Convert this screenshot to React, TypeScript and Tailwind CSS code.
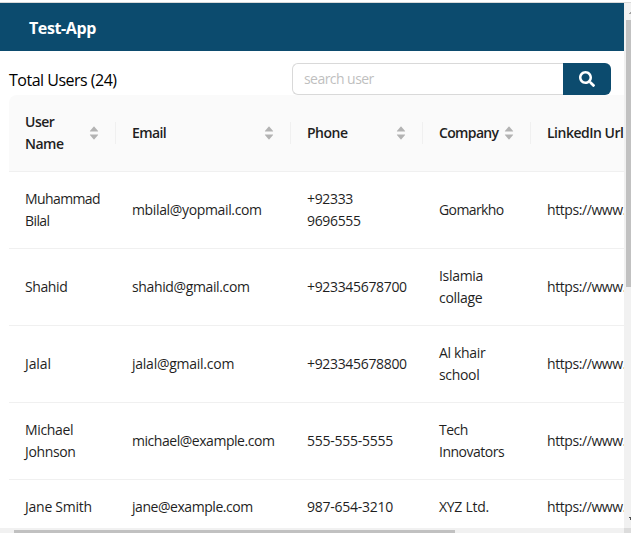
import type { ReactNode } from "react";
import { FaSearch } from "react-icons/fa";

const columns = [
  { title: "User Name", sortable: true, tracking: "tracking-[-0.5px]" },
  { title: "Email", sortable: true, tracking: "tracking-[-0.6px]" },
  { title: "Phone", sortable: true, tracking: "tracking-[-0.5px]" },
  { title: "Company", sortable: true, tracking: "tracking-[-0.65px]" },
  { title: "LinkedIn Url", sortable: false, tracking: "tracking-[-0.5px]" },
];

const users = [
  {
    name: ["Muhammad Bilal", "tracking-[-0.6px]"],
    email: ["mbilal@yopmail.com", "tracking-[-0.35px]"],
    phone: ["+92333 9696555", "tracking-[-0.33px]"],
    company: ["Gomarkho", "tracking-[-0.6px]"],
  },
  {
    name: ["Shahid", "tracking-[-0.4px]"],
    email: ["shahid@gmail.com", "tracking-[-0.37px]"],
    phone: ["+923345678700", "tracking-[-0.33px]"],
    company: ["Islamia collage", "tracking-[-0.3px]"],
  },
  {
    name: ["Jalal", "tracking-[-0.1px]"],
    email: ["jalal@gmail.com", "tracking-[-0.25px]"],
    phone: ["+923345678800", "tracking-[-0.33px]"],
    company: ["Al khair school", "tracking-[-0.33px]"],
  },
  {
    name: ["Michael Johnson", "tracking-[-0.35px]"],
    email: ["michael@example.com", "tracking-[-0.46px]"],
    phone: ["555-555-5555", "tracking-[-0.25px]"],
    company: ["Tech Innovators", "tracking-[-0.5px]"],
  },
  {
    name: ["Jane Smith", "tracking-[-0.25px]"],
    email: ["jane@example.com", "tracking-[-0.45px]"],
    phone: ["987-654-3210", "tracking-[-0.25px]"],
    company: ["XYZ Ltd.", "tracking-[-0.28px]"],
  },
];

const grid = "grid grid-cols-[107px_175px_132px_108px_200px] w-[722px]";

function Sorter() {
  return (
    <span className="flex w-3 shrink-0 flex-col text-[#b3b3b3]">
      <svg viewBox="0 0 1024 1024" className="size-3" fill="currentColor">
        <path d="M858.9 689L530.5 308.2c-9.4-10.9-27.5-10.9-37 0L165.1 689c-12.2 14.2-1.2 35 18.5 35h656.8c19.7 0 30.7-20.8 18.5-35z" />
      </svg>
      <svg viewBox="0 0 1024 1024" className="mt-[-3.6px] size-3" fill="currentColor">
        <path d="M840.4 300H183.6c-19.7 0-30.7 20.8-18.5 35l328.4 380.8c9.4 10.9 27.5 10.9 37 0L858.9 335c12.2-14.2 1.2-35-18.5-35z" />
      </svg>
    </span>
  );
}

function Cell({ children, className = "" }: { children: ReactNode; className?: string }) {
  return <div className={`flex items-center pl-4 ${className}`}>{children}</div>;
}

export default function App() {
  return (
    <div className="flex h-[533px] w-[631px] flex-col overflow-hidden bg-white pt-0.5 font-['Open_Sans','Noto_Sans',sans-serif] text-[#1f1f1f]">
      <div className="h-px shrink-0 bg-[#d9d9d9]" />
      <div className="flex h-[525px] shrink-0">
        <div className="w-[624px] overflow-hidden">
          <header className="flex h-12 items-center bg-[#0c4b6e] pt-0.5 pl-[29px] text-base font-bold text-white">
            <span className="tracking-[-0.4px]">Test-App</span>
          </header>
          <div className="flex h-11 items-end justify-between pr-[13px] pl-[9px]">
            <span className="flex h-8 items-center pt-px text-base tracking-[-0.5px] text-black">Total Users (24)</span>
            <div className="flex h-8">
              <div className="flex w-[271px] items-center rounded-l-md border border-r-0 border-[#d9d9d9] pl-[11px] text-sm tracking-[-0.55px] text-[#bfbfbf]">
                search user
              </div>
              <button className="flex w-12 items-center justify-center rounded-r-md bg-[#0c4b6e] text-white">
                <FaSearch size={16} />
              </button>
            </div>
          </div>
          <div className="ml-[9px] text-sm leading-[22px]">
            <div className={`${grid} h-[77px] rounded-tl-lg border-b border-[#f0f0f0] bg-[#fafafa] font-semibold`}>
              {columns.map((column) => (
                <div key={column.title} className="flex items-center">
                  <div className="flex flex-1 items-center justify-between pr-[15px] pl-4">
                    <span className={column.tracking}>{column.title}</span>
                    {column.sortable && <Sorter />}
                  </div>
                  <div className="h-[22px] w-px bg-[#f0f0f0]" />
                </div>
              ))}
            </div>
            {users.map(({ name, email, phone, company }, i) => (
              <div key={name[0]} className={`${grid} border-b border-[#f0f0f0] ${i === 4 ? "h-[55px]" : "h-[77px]"}`}>
                <Cell className={`pr-3 ${name[1]}`}>{name[0]}</Cell>
                <Cell className={`pr-3 ${email[1]}`}>{email[0]}</Cell>
                <Cell className={`pr-6 ${phone[1]}`}>{phone[0]}</Cell>
                <Cell className={`pr-4 ${company[1]}`}>{company[0]}</Cell>
                <Cell className="pr-4 tracking-[-0.42px]">https://www.linkedin.com</Cell>
              </div>
            ))}
          </div>
        </div>
        <div className="flex w-[7px] flex-col overflow-hidden bg-[#f1f1f1] pl-0.5">
          <svg width="5" height="17" className="shrink-0" fill="#a3a3a3"><path d="M3 11h2V9H4v1H3z" /></svg>
          <div className="h-[267px] shrink-0 bg-[#c1c1c1]" />
          <svg width="5" height="17" className="mt-auto shrink-0" fill="#505050"><path d="M3 6h2v3H4V7H3z" /></svg>
        </div>
      </div>
      <div className="flex h-[5px] shrink-0 bg-[#f1f1f1]">
        <div className="mt-0.5 ml-3.5 w-[441px] bg-[#c1c1c1]" />
        <div className="ml-auto w-[7px] bg-[#dcdcdc]" />
      </div>
    </div>
  );
}
